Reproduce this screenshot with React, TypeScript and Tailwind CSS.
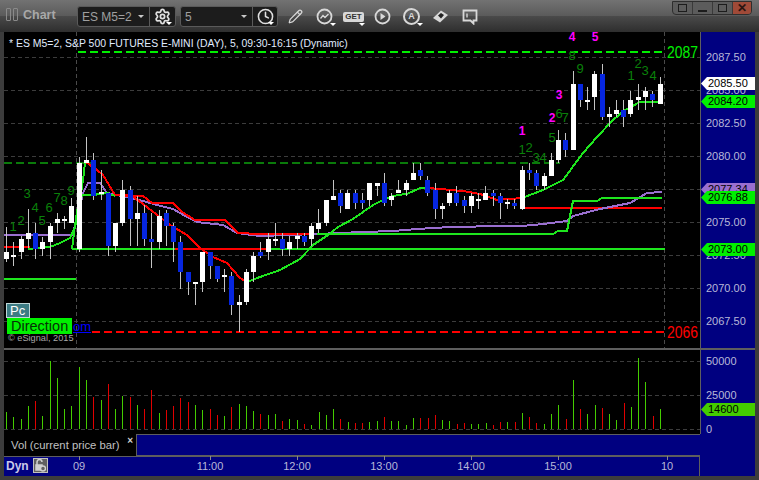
import React from "react";
import { Clock, Pencil, Settings } from "lucide-react";

// [x, wickTop, wickBottom, bodyTop, bodyBottom, isBlue]
const candles: number[][] = [
  [6, 227, 262, 252, 259, 0], [13, 242, 266, 255, 257, 0], [21, 236, 259, 239, 252, 0], [28, 209, 248, 233, 239, 0],
  [35, 223, 259, 233, 249, 1], [42, 237, 256, 242, 249, 0], [50, 223, 259, 226, 242, 0], [57, 213, 233, 219, 223, 0],
  [64, 216, 229, 219, 221, 0], [71, 198, 223, 206, 223, 0], [79, 157, 252, 163, 249, 0], [86, 137, 163, 160, 163, 0],
  [93, 153, 200, 160, 196, 1], [101, 170, 200, 192, 194, 0], [108, 193, 256, 193, 246, 1], [115, 223, 252, 223, 246, 0],
  [122, 180, 226, 190, 223, 0], [130, 186, 246, 190, 219, 1], [137, 196, 246, 213, 219, 0], [144, 205, 246, 213, 239, 1],
  [151, 213, 268, 239, 242, 1], [159, 210, 249, 216, 242, 0], [166, 210, 246, 213, 226, 1], [173, 223, 262, 226, 242, 1],
  [180, 236, 289, 242, 272, 1], [188, 272, 295, 272, 282, 1], [195, 282, 305, 282, 284, 0], [202, 252, 292, 252, 282, 0],
  [210, 252, 279, 252, 266, 1], [217, 266, 282, 266, 279, 1], [224, 269, 292, 275, 277, 0], [231, 272, 315, 276, 305, 1],
  [239, 295, 332, 302, 305, 0], [246, 269, 305, 272, 302, 0], [253, 252, 282, 256, 272, 0], [260, 242, 258, 252, 256, 1],
  [268, 233, 260, 239, 252, 0], [275, 223, 246, 239, 241, 0], [282, 233, 256, 239, 249, 1], [289, 236, 256, 242, 249, 0],
  [297, 233, 249, 236, 239, 0], [304, 233, 246, 236, 242, 1], [311, 223, 246, 226, 239, 0], [318, 209, 233, 223, 229, 0],
  [326, 200, 226, 200, 223, 0], [333, 180, 200, 196, 200, 0], [340, 190, 213, 193, 206, 1], [347, 190, 209, 193, 209, 0],
  [355, 190, 209, 193, 203, 1], [362, 193, 209, 200, 203, 1], [369, 183, 206, 183, 200, 0], [377, 183, 196, 183, 186, 0],
  [384, 173, 206, 183, 203, 1], [391, 193, 206, 196, 200, 0], [398, 180, 193, 190, 193, 0], [406, 180, 196, 183, 190, 0],
  [413, 163, 180, 173, 180, 0], [420, 163, 180, 170, 176, 1], [427, 176, 196, 180, 193, 1], [435, 183, 219, 190, 209, 1],
  [442, 203, 219, 206, 209, 0], [449, 190, 206, 193, 203, 0], [456, 186, 206, 193, 203, 1], [464, 196, 213, 200, 206, 1],
  [471, 193, 213, 196, 206, 0], [478, 193, 209, 199, 201, 0], [485, 186, 200, 193, 200, 0], [493, 190, 206, 193, 196, 1],
  [500, 193, 219, 196, 203, 1], [507, 199, 209, 202, 204, 0], [514, 199, 209, 203, 206, 1], [522, 166, 210, 170, 209, 0],
  [529, 163, 180, 170, 173, 1], [536, 170, 190, 173, 186, 1], [544, 173, 190, 176, 186, 0], [551, 153, 176, 160, 176, 0],
  [558, 130, 163, 140, 160, 0], [565, 133, 157, 140, 150, 1], [573, 71, 150, 84, 150, 0], [580, 84, 107, 84, 100, 1],
  [587, 87, 110, 100, 102, 0], [594, 71, 110, 74, 97, 0], [602, 64, 120, 74, 117, 1], [609, 107, 127, 114, 117, 0],
  [616, 100, 117, 110, 114, 0], [623, 100, 127, 110, 117, 1], [630, 91, 117, 100, 114, 0], [638, 84, 110, 97, 100, 0],
  [645, 87, 110, 91, 97, 0], [652, 91, 107, 94, 100, 1], [660, 77, 104, 84, 104, 0],
];

// [x, top, isRed] - bottom of every bar is y=429
const volumes: number[][] = [
  [6, 412, 0], [13, 417, 0], [21, 419, 0], [28, 406, 0], [35, 401, 1], [42, 416, 0], [50, 361, 0], [57, 378, 0],
  [64, 409, 0], [71, 406, 0], [79, 367, 0], [86, 380, 0], [93, 397, 1], [101, 400, 0], [108, 384, 1], [115, 409, 0],
  [122, 396, 0], [130, 397, 1], [137, 405, 0], [144, 409, 1], [151, 390, 1], [159, 413, 0], [166, 410, 1], [173, 406, 1],
  [180, 398, 1], [188, 402, 1], [195, 405, 0], [202, 410, 0], [210, 409, 1], [217, 415, 1], [224, 416, 0], [231, 407, 1],
  [239, 404, 0], [246, 406, 0], [253, 411, 0], [260, 414, 1], [268, 415, 0], [275, 414, 0], [282, 421, 1], [289, 419, 0],
  [297, 420, 0], [304, 424, 1], [311, 425, 0], [319, 412, 0], [326, 415, 0], [333, 409, 0], [340, 419, 1], [348, 422, 0],
  [355, 423, 1], [362, 423, 1], [369, 422, 0], [377, 421, 0], [384, 417, 1], [391, 421, 0], [398, 421, 0], [406, 425, 0],
  [413, 418, 0], [420, 418, 1], [428, 418, 1], [435, 415, 1], [442, 420, 0], [449, 421, 0], [457, 424, 1], [464, 423, 1],
  [471, 424, 0], [478, 424, 0], [486, 423, 0], [493, 425, 1], [500, 422, 1], [507, 422, 0], [515, 422, 1], [522, 413, 0],
  [529, 417, 1], [536, 423, 1], [544, 424, 0], [551, 414, 0], [558, 405, 0], [566, 419, 1], [573, 380, 0], [580, 409, 1],
  [587, 414, 0], [595, 405, 0], [602, 408, 1], [609, 414, 0], [616, 420, 0], [624, 403, 1], [631, 407, 0], [638, 358, 0],
  [645, 382, 0], [653, 416, 1], [660, 409, 0],
];

const purple =
  "4,235 72,235 77,220 83,193 88,183 100,183 107,193 127,197 143,201 157,205 173,209 187,217 197,222 223,225 237,233 260,236 317,234 363,232 393,231 417,229 450,227 503,226 522,226 543,224 567,221 573,216 600,209 630,203 647,193 662,192";
const redUpper =
  "86,162 97,170 103,175 115,195 143,196 152,203 173,203 182,212 195,220 225,220 238,233 260,234 313,234";
const redLower = "115,195 132,196 143,204 170,225 187,235 200,248 213,257 227,263 240,278 247,282";
const redMid = "427,188 440,189 463,191 480,194 497,200 522,198";
const greenFastA = "28,249 50,247 60,243 70,238 75,227 79,207 83,180 85,163";
const greenFastB =
  "247,282 260,277 280,270 300,259 313,245 328,235 338,227 353,219 373,205 387,198 398,195 407,194 420,188 427,188";
const greenFastC = "522,198 543,190 563,180 583,153 597,137 613,120 625,110 640,102 662,102";
const greenStepA = "72,249 75,225 79,200 83,195 93,195 107,193 115,196";
const greenStepB = "317,234 553,234 558,231 567,231 573,201 597,201 602,198 662,198";

const setups: [string, number, number][] = [
  ["1", 13, 231], ["2", 21, 225], ["3", 27, 198], ["4", 35, 212], ["5", 42, 225], ["6", 49, 212], ["7", 57, 202],
  ["8", 64, 205], ["9", 71, 195], ["1", 522, 154], ["2", 529, 152], ["3", 536, 162], ["4", 543, 162], ["5", 552, 142],
  ["6", 559, 118], ["7", 565, 122], ["8", 572, 60], ["9", 580, 73], ["1", 631, 80], ["2", 638, 68], ["3", 645, 75],
  ["4", 653, 80],
];
const waves: [string, number, number][] = [
  ["1", 522, 135], ["2", 552, 122], ["3", 559, 99], ["4", 572, 41], ["5", 595, 41],
];

const gridYs = [57, 90, 123, 156, 189, 222, 255, 288, 321];
const priceTicks: [string, number][] = [
  ["2087.50", 57], ["2085.00", 90], ["2082.50", 123], ["2080.00", 156], ["2075.00", 222],
  ["2072.50", 255], ["2070.00", 288], ["2067.50", 321],
];
const tags: [string, number, string][] = [
  ["2077.34", 189, "bg-[#9a6fd0]"], ["2085.50", 83, "bg-white"], ["2084.20", 101, "bg-[#00f000]"],
  ["2076.88", 197, "bg-[#00f000]"], ["2073.00", 249, "bg-[#00f000]"],
];
const timeTicks: [string, number][] = [
  ["09", 79], ["11:00", 210], ["12:00", 297], ["13:00", 384], ["14:00", 471], ["15:00", 558], ["10", 667],
];

function Line({ points, color, width = 2 }: { points: string; color: string; width?: number }) {
  return <polyline points={points} fill="none" stroke={color} strokeWidth={width} shapeRendering="crispEdges" />;
}

function Caret() {
  return <span className="h-0 w-0 border-x-[3px] border-t-[3px] border-x-transparent border-t-[#c8c8c8]" />;
}

function ToolIcon({ children, caret }: { children: React.ReactNode; caret?: boolean }) {
  return (
    <div className="relative flex h-[21px] w-[29px] items-center justify-center text-[#d8d8d8]">
      {children}
      {caret && (
        <span className="absolute bottom-[1px] right-[3px] h-0 w-0 border-x-[3px] border-t-[3px] border-x-transparent border-t-white" />
      )}
    </div>
  );
}

function Toolbar() {
  return (
    <div className="relative flex h-8 items-start bg-[linear-gradient(#727272_0%,#5a5a5a_50%,#4a4a4a_50%,#2e2e2e_100%)] pl-[6px] pt-[6px]">
      <div className="mt-[2px] flex gap-[2px]">
        <span className="h-[13px] w-[5px] rounded-[1px] border border-[#8a8a8a]" />
        <span className="h-[13px] w-[5px] rounded-[1px] border border-[#8a8a8a]" />
      </div>
      <span className="ml-[5px] mt-[1px] w-[54px] text-[12.500px] font-bold leading-[17px] text-[#a8a8a8]">Chart</span>
      <div className="flex h-[21px] w-[99px] rounded-[3px] border border-[#5a5a5a] bg-[#1c1c1c]">
        <div className="flex w-[72px] items-center justify-between whitespace-nowrap border-r border-[#5a5a5a] pl-[4px] pr-[5px] text-[12px] text-[#a0a0a0]">
          ES M5=2
          <Caret />
        </div>
        <div className="relative flex flex-1 items-center justify-center text-[#e0e0e0]">
          <Settings size={17} strokeWidth={2.5} />
          <span className="absolute bottom-[1px] right-[3px] h-0 w-0 border-x-[3px] border-t-[3px] border-x-transparent border-t-white" />
        </div>
      </div>
      <div className="ml-[4px] flex h-[21px] w-[98px] rounded-[3px] border border-[#5a5a5a] bg-[#1c1c1c]">
        <div className="flex w-[72px] items-center justify-between border-r border-[#5a5a5a] pl-[4px] pr-[5px] text-[12px] text-[#a0a0a0]">
          5
          <Caret />
        </div>
        <div className="relative flex flex-1 items-center justify-center text-[#e0e0e0]">
          <Clock size={17} strokeWidth={2.2} />
          <span className="absolute bottom-[1px] right-[3px] h-0 w-0 border-x-[3px] border-t-[3px] border-x-transparent border-t-white" />
        </div>
      </div>
      <div className="ml-[3px] flex">
        <ToolIcon>
          <Pencil size={15} strokeWidth={2} />
        </ToolIcon>
        <ToolIcon caret>
          <svg width="17" height="17" viewBox="0 0 17 17" fill="none" stroke="currentColor" strokeWidth="1.8">
            <circle cx="8.5" cy="8.5" r="7" />
            <path d="M4.5 10.5 7 7.5 9 9.5 12.5 6" strokeWidth="1.3" />
          </svg>
        </ToolIcon>
        <ToolIcon caret>
          <div className="rounded-[2px] bg-[#d8d8d8] px-[2px] text-[8px] font-bold leading-[10px] text-[#333]">GET</div>
        </ToolIcon>
        <ToolIcon>
          <svg width="17" height="17" viewBox="0 0 17 17" fill="none" stroke="currentColor" strokeWidth="1.8">
            <circle cx="8.5" cy="8.5" r="7" />
            <path d="M6.5 5v7l5-3.5z" fill="currentColor" stroke="none" />
          </svg>
        </ToolIcon>
        <ToolIcon caret>
          <div className="flex h-[17px] w-[17px] items-center justify-center rounded-full border-2 border-[#d8d8d8] text-[9px] font-bold leading-none">
            A
          </div>
        </ToolIcon>
        <ToolIcon>
          <svg width="17" height="15" viewBox="0 0 17 15">
            <path d="M1 9 9 1.5 16 6 8 13.500z" fill="#d8d8d8" />
            <path d="M6 6.500 9 9.500 12 6 9 4z" fill="#222" />
          </svg>
        </ToolIcon>
        <ToolIcon>
          <svg width="16" height="16" viewBox="0 0 16 16" fill="none" stroke="currentColor" strokeWidth="1.8">
            <path d="M1.500 1.500h13v10h-3v3l-3-3h-7z" />
            <path d="M5 4.500v4" strokeWidth="1.400" />
          </svg>
        </ToolIcon>
      </div>
      {/* window buttons */}
      <div className="absolute right-[7px] top-[1px] flex h-[14px] w-[80px] overflow-hidden rounded-b-[4px] border border-[#2e2e2e] bg-[#5c5c5c]">
        <div className="flex w-[20px] items-center justify-center border-r border-[#3a3a3a]">
          <span className="h-[8px] w-[9px] border border-[#1c1c1c]" />
        </div>
        <div className="flex w-[20px] items-end justify-center border-r border-[#3a3a3a] pb-[2px]">
          <span className="h-[2px] w-[9px] bg-[#1c1c1c]" />
        </div>
        <div className="flex w-[20px] items-center justify-center border-r border-[#3a3a3a]">
          <span className="h-[8px] w-[9px] border border-[#1c1c1c]" />
        </div>
        <div className="flex flex-1 items-center justify-center bg-[#a04a38] text-[12px] font-bold leading-none text-[#2a1410]">
          ✕
        </div>
      </div>
    </div>
  );
}

function PricePlot() {
  return (
    <svg width="696" height="316" viewBox="4 32 696 316" className="block bg-black">
      {gridYs.map((y) => (
        <line key={y} x1="4" x2="700" y1={y + 0.5} y2={y + 0.5} stroke="#3c3c3c" strokeDasharray="4 3" />
      ))}
      <line x1="76.500" x2="76.500" y1="32" y2="348" stroke="#4a4a4a" strokeDasharray="4 3" />
      <line x1="664.500" x2="664.500" y1="32" y2="348" stroke="#4a4a4a" strokeDasharray="4 3" />
      <line x1="4" x2="560" y1="163" y2="163" stroke="#0a7a0a" strokeWidth="2" strokeDasharray="8 4" />
      <line x1="78" x2="664" y1="52" y2="52" stroke="#00f000" strokeWidth="2" strokeDasharray="8 4" />
      <line x1="92" x2="664" y1="332" y2="332" stroke="#ff0000" strokeWidth="2" strokeDasharray="8 4" />
      <Line points="4,279 76,279" color="#1ee61e" />
      <Line points="4,247 30,247" color="#ff0000" />
      <Line points="175,249 270,249" color="#ff0000" />
      <Line points="522,208 662,208" color="#ff0000" />
      <Line points={purple} color="#9a6fd0" />
      <Line points={redLower} color="#ff0000" />
      <Line points={redUpper} color="#ff0000" />
      <Line points={redMid} color="#ff0000" />
      <Line points="72,249 175,249" color="#1ee61e" />
      <Line points="270,249 665,249" color="#1ee61e" />
      <Line points={greenStepA} color="#1ee61e" />
      <Line points={greenStepB} color="#1ee61e" />
      <Line points={greenFastA} color="#1ee61e" />
      <Line points={greenFastB} color="#1ee61e" />
      <Line points={greenFastC} color="#1ee61e" />
      {candles.map(([x, wt, wb, bt, bb, blue]) => (
        <g key={x} shapeRendering="crispEdges">
          <rect x={x} y={wt} width="1" height={wb - wt} fill="#c4c4c4" />
          <rect x={x - 2} y={bt} width="5" height={bb - bt} fill={blue ? "#0626e0" : "#ffffff"} />
        </g>
      ))}
      {setups.map(([t, x, y]) => (
        <text key={`${x}-${y}`} x={x} y={y} textAnchor="middle" fontSize="13" fontFamily="Liberation Sans" fill="#0a800a">
          {t}
        </text>
      ))}
      {waves.map(([t, x, y]) => (
        <text key={`${x}-${y}`} x={x} y={y} textAnchor="middle" fontSize="12" fontWeight="700" fontFamily="Liberation Sans" fill="#ff00ff">
          {t}
        </text>
      ))}
      <text x="667" y="58" fontSize="16" textLength="31" lengthAdjust="spacingAndGlyphs" fontFamily="Liberation Sans" fill="#00f000">2087</text>
      <text x="667" y="338" fontSize="16" textLength="31" lengthAdjust="spacingAndGlyphs" fontFamily="Liberation Sans" fill="#ff0000">2066</text>
    </svg>
  );
}

function VolumePlot() {
  return (
    <svg width="696" height="84" viewBox="4 350 696 84" className="block bg-black">
      {[361, 395, 429].map((y) => (
        <line key={y} x1="4" x2="700" y1={y + 0.5} y2={y + 0.5} stroke="#3c3c3c" strokeDasharray="4 3" />
      ))}
      {volumes.map(([x, top, red]) => (
        <rect key={x} x={x} y={top} width="1" height={429 - top} fill={red ? "#e00000" : "#44cc00"} shapeRendering="crispEdges" />
      ))}
    </svg>
  );
}

function AxisTick({ label, y }: { label: string; y: number }) {
  return (
    <span className="absolute left-[5px] text-[11px] leading-[12px] text-[#b8b8d8]" style={{ top: y - 6 }}>
      {label}
    </span>
  );
}

function Tag({ label, top, bg }: { label: string; top: number; bg: string }) {
  return (
    <div
      className={`absolute left-0 right-0 h-[13px] pl-[7px] text-[11px] leading-[13px] text-black [clip-path:polygon(0_50%,6px_0,100%_0,100%_100%,6px_100%)] ${bg}`}
      style={{ top }}
    >
      {label}
    </div>
  );
}

export default function App() {
  return (
    <div className="flex h-[480px] w-[759px] flex-col overflow-hidden bg-[#3c3c3c] font-['Liberation_Sans',Arial,sans-serif]">
      <Toolbar />
      <div className="flex flex-1 flex-col px-1 pb-1">
        <div className="flex h-[316px]">
          <div className="relative w-[696px]">
            <PricePlot />
            <div className="absolute left-[5px] top-[5px] whitespace-nowrap text-[10.450px] leading-[14px] text-[#e0ecff]">
              * ES M5=2, S&amp;P 500 FUTURES E-MINI (DAY), 5, 09:30-16:15 (Dynamic)
            </div>
            <div className="absolute left-[2px] top-[271px] h-[15px] w-[24px] border border-[#c0d8d8] bg-[#3c7c84] pl-[3px] text-[13px] leading-[13px] text-white">
              Pc
            </div>
            <div className="absolute left-[3px] top-[286px] flex items-end">
              <span className="h-[16px] w-[65px] bg-[#00f000] pl-[4px] text-[14.500px] leading-[16px] text-[#063006]">Direction</span>
              <span className="ml-[1px] text-[13px] leading-[14px] text-[#0000ff] underline">om</span>
            </div>
            <div className="absolute left-[4px] top-[301px] whitespace-nowrap text-[9.200px] leading-[11px] text-[#a8a8a8]">© eSignal, 2015</div>
          </div>
          <div className="relative flex-1 border-l border-[#5e5e5e] bg-[#000080]">
            {priceTicks.map(([label, y]) => (
              <AxisTick key={label} label={label} y={y - 32} />
            ))}
            {tags.map(([label, y, bg]) => (
              <Tag key={label} label={label} top={y - 32 - 6} bg={bg} />
            ))}
          </div>
        </div>
        <div className="h-[2px] bg-[#5e5e5e]" />
        <div className="flex h-[84px]">
          <VolumePlot />
          <div className="relative flex-1 border-l border-[#5e5e5e] bg-[#000080]">
            <AxisTick label="50000" y={11} />
            <AxisTick label="25000" y={45} />
            <AxisTick label="0" y={79} />
            <Tag label="14600" top={53} bg="bg-[#44cc00]" />
          </div>
        </div>
        <div className="flex h-[22px]">
          <div className="relative w-[132px] whitespace-nowrap bg-black pl-[7px] text-[11.300px] leading-[22px] text-[#c0c0c0]">
            Vol (current price bar)
            <span className="absolute right-[3px] top-[1px] text-[10px] font-bold leading-[12px] text-[#d0d0d0]">×</span>
          </div>
          <div className="w-[564px] border-y border-l border-[#5e5e5e] bg-[#000080]" />
          <div className="flex-1 bg-[#000080]" />
        </div>
        <div className="relative flex h-[20px] bg-[#000080]">
          <div className="flex w-[696px] border-t border-r border-[#5e5e5e]">
            <span className="ml-[2px] mt-[1px] text-[12px] font-bold leading-[16px] text-[#c8c8e8]">Dyn</span>
            <div className="ml-[4px] mt-[1px] flex h-[15px] w-[15px] items-center justify-center border border-[#c0c0c0] bg-[#606060]">
              <svg width="11" height="13" viewBox="0 0 11 13" fill="none" stroke="#d0d0d0" strokeWidth="1.500">
                <path d="M2 6V3a2.500 2.500 0 0 1 5 0" />
                <rect x="1" y="6" width="6" height="5" fill="#d0d0d0" />
                <circle cx="8" cy="9.500" r="2.500" fill="#606060" />
              </svg>
            </div>
          </div>
          {timeTicks.map(([label, x]) => (
            <React.Fragment key={label}>
              <span className="absolute top-0 h-[4px] w-px bg-[#8a8a8a]" style={{ left: x - 4 }} />
              <span
                className="absolute top-[4px] -translate-x-1/2 text-[11px] leading-[13px] text-[#b8b8d8]"
                style={{ left: x - 4 }}
              >
                {label}
              </span>
            </React.Fragment>
          ))}
        </div>
      </div>
    </div>
  );
}
